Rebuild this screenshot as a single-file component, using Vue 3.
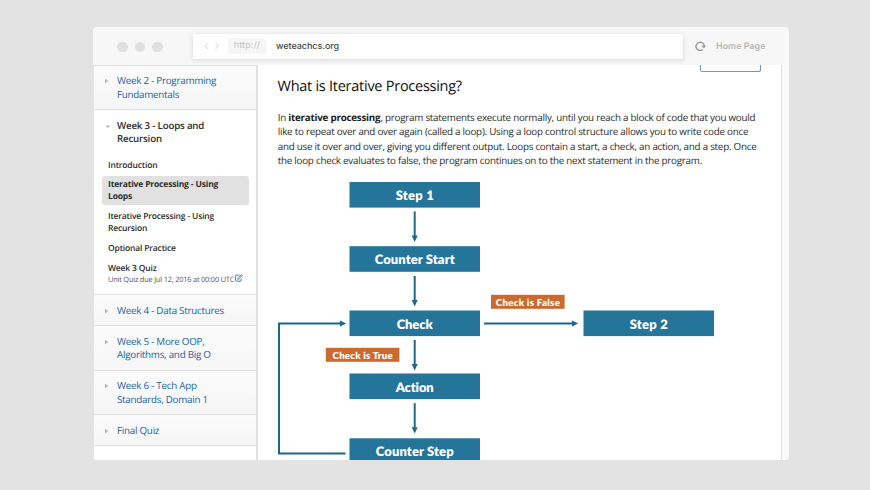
<script setup>
const before = [{ lines: ['Week 2 - Programming', 'Fundamentals'] }]
const after = [
  { lines: ['Week 4 - Data Structures'] },
  { lines: ['Week 5 - More OOP,', 'Algorithms, and Big O'] },
  { lines: ['Week 6 - Tech App', 'Standards, Domain 1'] },
  { lines: ['Final Quiz'] },
]
const lessons = [
  { lines: ['Introduction'] },
  { lines: ['Iterative Processing - Using', 'Loops'], active: true },
  { lines: ['Iterative Processing - Using', 'Recursion'] },
  { lines: ['Optional Practice'] },
]
const boxes = [
  { x: 349.5, y: 182, label: 'Step 1', w: 38 },
  { x: 349.5, y: 246.2, label: 'Counter Start', w: 80 },
  { x: 349.5, y: 310.5, label: 'Check', w: 36 },
  { x: 349.5, y: 373.5, label: 'Action', w: 38 },
  { x: 349.5, y: 438.3, label: 'Counter Step', w: 78 },
  { x: 583.5, y: 310.5, label: 'Step 2', w: 38 },
]
const arrows = [211.5, 276, 340, 403.2]
const tags = [
  { x: 491, y: 294.8, label: 'Check is False', w: 64 },
  { x: 325.8, y: 347.8, label: 'Check is True', w: 60 },
]
</script>

<template>
  <div class="stage">
    <div class="window">
      <header class="bar">
        <div class="dots"><i></i><i></i><i></i></div>
        <div class="address">
          <svg class="nav" width="16" height="8" viewBox="0 0 16 8">
            <path d="M3.8 1 L.9 4 L3.8 7 M11.5 1 L14.4 4 L11.5 7" />
          </svg>
          <span class="scheme">http://</span>
          <span class="url">weteachcs.org</span>
        </div>
        <svg class="reload" width="11" height="11" viewBox="0 0 11 11">
          <path d="M7.4 8.7 A4.1 4.1 0 1 1 9.2 5.1" />
          <path class="tip" d="M6.5 4.7 H11 L8.9 7.4 Z" />
        </svg>
        <span class="home">Home Page</span>
      </header>
      <div class="body">
        <nav class="side">
          <section v-for="w in before" :key="w.lines[0]" class="week first">
            <svg class="caret" width="4" height="6" viewBox="0 0 4 6"><path d="M0 .6 L3.4 3 L0 5.4Z" /></svg>
            <div><div v-for="l in w.lines" :key="l">{{ l }}</div></div>
          </section>
          <section class="open">
            <div class="title">
              <svg class="caret" width="6" height="4" viewBox="0 0 6 4"><path d="M.4 .5 H5.2 L2.8 3.2Z" /></svg>
              <div><div>Week 3 - Loops and</div><div>Recursion</div></div>
            </div>
            <div v-for="(s, i) in lessons" :key="i" class="lesson" :class="{ active: s.active }">
              <div v-for="l in s.lines" :key="l">{{ l }}</div>
            </div>
            <div class="lesson quiz">
              <div>Week 3 Quiz</div>
              <div class="due">
                <span>Unit Quiz due Jul 12, 2016 at 00:00 UTC</span>
                <svg width="8" height="8" viewBox="0 0 8 8">
                  <path d="M4.5 1.2 H1.3 Q.6 1.2 .6 1.9 V6.5 Q.6 7.2 1.3 7.2 H5.5 Q6.2 7.2 6.2 6.5 V5" />
                  <path class="pen" d="M2.7 5.5 L3.1 4.1 L6.5 .5 L7.6 1.5 L4.2 5.1 Z" />
                </svg>
              </div>
            </div>
          </section>
          <section v-for="w in after" :key="w.lines[0]" class="week">
            <svg class="caret" width="4" height="6" viewBox="0 0 4 6"><path d="M0 .6 L3.4 3 L0 5.4Z" /></svg>
            <div><div v-for="l in w.lines" :key="l">{{ l }}</div></div>
          </section>
        </nav>
        <main class="content">
          <div class="tab"></div>
          <h1>What is Iterative Processing?</h1>
          <div class="copy">
            <div>In <b>iterative processing</b>, program statements execute normally, until you reach a block of code that you would</div>
            <div>like to repeat over and over again (called a loop). Using a loop control structure allows you to write code once</div>
            <div>and use it over and over, giving you different output. Loops contain a start, a check, an action, and a step. Once</div>
            <div>the loop check evaluates to false, the program continues on to the next statement in the program.</div>
          </div>
          <svg class="chart" width="523" height="286" viewBox="258 174 523 286">
            <g v-for="b in boxes" :key="b.label">
              <rect class="box" :x="b.x" :y="b.y" width="130.5" height="25.6" />
              <text class="label" :x="b.x + 65.2" :y="b.y + 18" :textLength="b.w">{{ b.label }}</text>
            </g>
            <g v-for="y in arrows" :key="y">
              <path class="line" :d="`M414.7 ${y} v25`" />
              <path class="head" :d="`M411.7 ${y + 24} h6 l-3 6.4z`" />
            </g>
            <path class="line" d="M484 323.5 H573" />
            <path class="head" d="M572 320.4 v6.2 l6.2 -3.1z" />
            <path class="line" d="M345.5 453.5 H279 V323.5 H341" />
            <path class="head" d="M340 320.4 v6.2 l6.2 -3.1z" />
            <g v-for="t in tags" :key="t.label">
              <rect class="tag" :x="t.x" :y="t.y" width="73.6" height="14" />
              <text class="small" :x="t.x + 36.8" :y="t.y + 11" :textLength="t.w">{{ t.label }}</text>
            </g>
          </svg>
        </main>
        <div class="gutter"></div>
      </div>
    </div>
  </div>
</template>

<style>
body { background: #e3e3e3; }
</style>

<style scoped>
* { box-sizing: border-box; }
.stage { width: 870px; height: 490px; padding: 27px 81px 30px 93px; background: #e3e3e3; overflow: hidden; font-family: "Open Sans", "Noto Sans", sans-serif; white-space: nowrap; text-rendering: geometricPrecision; font-variant-ligatures: none; }
.window { width: 696px; height: 433px; border-radius: 4px; overflow: hidden; background: #f7f7f7; display: flex; flex-direction: column; }
.bar { height: 38px; flex: none; display: flex; align-items: center; background: #f7f7f7; }
.dots { display: flex; gap: 7px; padding: 2px 0 0 24px; width: 100px; }
.dots i { width: 10.7px; height: 10.7px; border-radius: 50%; background: #e0e0e0; }
.address { width: 490px; height: 25px; background: #fff; border-radius: 2px; box-shadow: 0 1px 5px rgba(0, 0, 0, .14); display: flex; align-items: center; font-family: Inter, sans-serif; }
.nav { margin-left: 11px; fill: none; stroke: #d2d2d2; }
.scheme { width: 38px; height: 16px; margin-left: 8px; background: #f6f6f6; border-radius: 2px; color: #c4c4c4; font-size: 9px; line-height: 16px; text-align: center; letter-spacing: .1px; }
.url { margin-left: 10px; color: #444; font-size: 9px; font-weight: 500; letter-spacing: -.05px; }
.reload { margin-left: 12px; fill: none; stroke: #969696; stroke-width: 1.4; }
.tip { fill: #969696; stroke: none; }
.home { margin-left: 10px; color: #b4b4b4; font: 600 8.8px Inter, sans-serif; letter-spacing: .1px; }
.body { height: 395px; display: flex; }
.side { width: 165px; flex: none; background: #fff; border-left: 1.5px solid #e3e3e3; border-right: 2px solid #e1e1e1; border-top: 1px solid #e1e1e1; }
.week { display: flex; padding: 8.8px 0 7.9px 11px; border-bottom: 1px solid #e0e0e0; background: linear-gradient(#fbfbfb, #f6f6f6); color: #2263a5; font-size: 9.8px; letter-spacing: -.25px; line-height: 13.4px; }
.week.first { padding: 8.2px 0 8px 11px; }
.caret { flex: none; fill: #bcbcbc; margin: 4px 8px 0 0; }
.open { height: 185px; border-bottom: 1px solid #e0e0e0; padding-top: 8.5px; color: #2c2c2c; }
.title { display: flex; padding-left: 11px; font-size: 9.7px; letter-spacing: -.17px; line-height: 13.5px; font-weight: 600; margin-bottom: 10px; }
.title .caret { margin: 6px 6px 0 0; }
.lesson { margin: 0 7px 0 8px; padding: 4px 6px; font-size: 8.5px; letter-spacing: -.17px; line-height: 12px; font-weight: 600; }
.lesson.active { background: #e1e1e1; border-radius: 3px; padding: 3.2px 6px 2px; margin: .6px 7px 2.2px 8px; font-weight: 700; }
.quiz { line-height: 11.2px; }
.due { display: flex; font-size: 7.4px; letter-spacing: -.2px; font-weight: 400; color: #555; }
.due svg { margin: -1px 0 0 1px; flex: none; fill: none; stroke: #2f86bd; stroke-width: 1; }
.due .pen { fill: #b9d8ea; stroke-width: .7; }
.content { width: 523px; background: #fff; position: relative; padding-top: 11px; }
.tab { position: absolute; left: 442px; top: 0; width: 61px; height: 6.5px; border: 1.4px solid #7496ae; border-top: 0; border-radius: 0 0 2.5px 2.5px; }
h1 { margin: 0 0 0 19.5px; font-size: 14.5px; letter-spacing: -.26px; line-height: 22px; font-weight: 400; color: #111; }
.copy { margin: 12.5px 0 0 19.7px; font-size: 9.8px; letter-spacing: -.235px; line-height: 14.5px; color: #2c2c2c; }
.copy b { color: #1c1c1c; }
.chart { position: absolute; left: 0; top: 109px; }
.box { fill: #25749a; }
.label, .small { font-family: Lato, sans-serif; font-weight: 800; fill: #fff; text-anchor: middle; font-size: 13px; }
.small { font-size: 9.6px; }
.tag { fill: #cb6a2e; }
.line { fill: none; stroke: #19698f; stroke-width: 2; }
.head { fill: #19698f; }
.gutter { flex: 1; background: #f9f9f9; border-left: 1.4px solid #dedede; }
</style>
